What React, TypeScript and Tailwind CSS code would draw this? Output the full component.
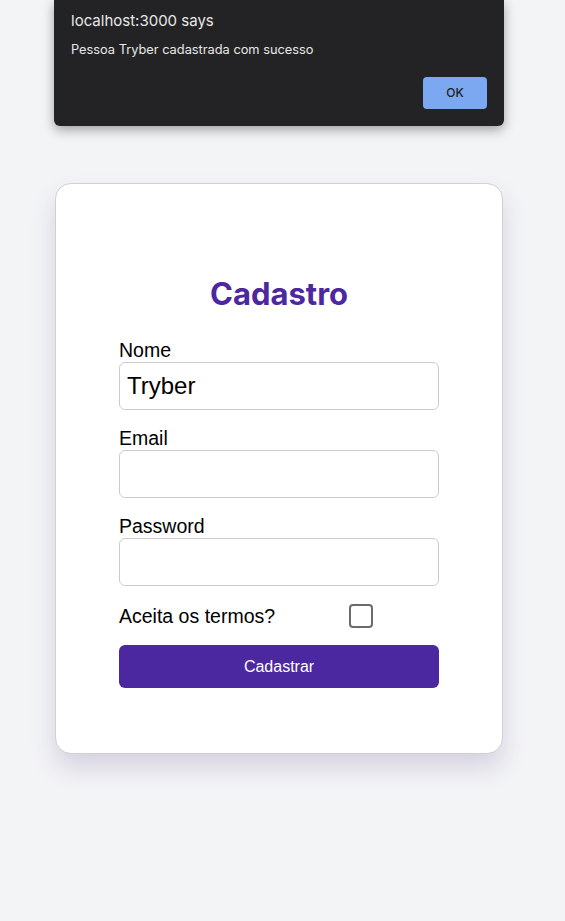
import React from "react";

function Field({ label, value, type = "text" }: { label: string; value?: string; type?: string }) {
  return (
    <label className="flex flex-col">
      <span className="text-[19.5px] leading-[23px] text-black">{label}</span>
      <input
        type={type}
        defaultValue={value}
        className="h-[48px] w-full rounded-[6px] border border-[#cccccc] bg-white px-[7px] text-[24px] text-black outline-none"
      />
    </label>
  );
}

export default function App() {
  return (
    <div className="relative min-h-screen bg-[#f3f4f6]" style={{ fontFamily: '"Liberation Sans", Arial, sans-serif' }}>
      {/* browser alert */}
      <div
        className="absolute left-[54px] top-0 z-10 flex h-[126px] w-[450px] flex-col rounded-b-[6px] bg-[#232325] px-[17px] shadow-[0_4px_12px_rgba(0,0,0,0.35)]"
        style={{ fontFamily: "Inter, sans-serif" }}
      >
        <div className="mt-[12px] text-[15px] leading-[18px] text-[#e8e8e8]">localhost:3000 says</div>
        <div className="mt-[12px] text-[12.8px] leading-[16px] text-[#e8e8e8]">Pessoa Tryber cadastrada com sucesso</div>
        <div className="mt-[19px] flex justify-end">
          <button className="h-[32px] w-[64px] rounded-[4px] bg-[#7ba8f1] text-[12px] font-medium text-[#1e1e1e]">OK</button>
        </div>
      </div>

      <div className="flex pt-[183px] pb-[100px] pl-[55px]">
        <div className="w-[448px] shrink-0 rounded-[16px] border border-[#cfcfd4] bg-white px-[63px] pt-[90px] pb-[65px] shadow-[0_14px_24px_rgba(90,60,130,0.18)]">
          <h1
            className="text-center text-[31px] font-bold leading-[39px] text-[#4c27a0]"
            style={{ fontFamily: "Inter, sans-serif" }}
          >
            Cadastro
          </h1>
          <form className="mt-[26px] flex flex-col gap-[17px]">
            <Field label="Nome" value="Tryber" />
            <Field label="Email" />
            <Field label="Password" type="password" />
            <div className="flex h-[26px] items-center">
              <span className="w-[230px] text-[19.5px] leading-[23px] text-black">Aceita os termos?</span>
              <input
                type="checkbox"
                className="h-[24px] w-[24px] appearance-none rounded-[4px] border-2 border-[#6b6b6b] bg-white"
              />
            </div>
            <button
              type="button"
              className="-mt-[1px] h-[43px] w-full rounded-[6px] bg-[#4c28a0] text-[16px] text-white"
            >
              Cadastrar
            </button>
          </form>
        </div>
      </div>
    </div>
  );
}
